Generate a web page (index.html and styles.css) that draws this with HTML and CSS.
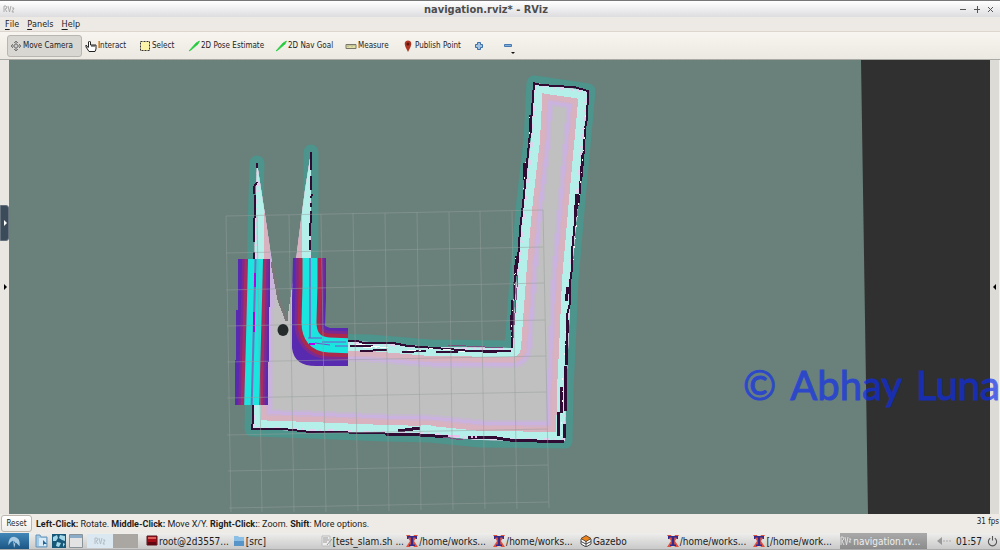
FILE: index.html
```html
<!DOCTYPE html>
<html lang="en">
<head>
<meta charset="utf-8">
<title>navigation.rviz* - RViz</title>
<link rel="stylesheet" href="styles.css">
</head>
<body>
<svg class="defs" aria-hidden="true">
  <symbol id="xterm" viewBox="0 0 12 12"><path fill="#e0503c" d="M0 0h4l2 4 2-4h4L8 6l4 6H8L6 8l-2 4H0l4-6z"/><path fill="#322a8c" d="M1 1h10v3H9.500V2.500H7.200v7H9V11H3V9.500h1.800v-7H2.500V4H1z"/></symbol>
  <symbol id="arrow" viewBox="0 0 12 12"><path fill="#22cc3c" stroke="#22cc3c" stroke-width=".7" d="M1 11 8 3 11.500 1l-1.500 3L3 10z"/></symbol>
</svg>
<div class="app">
  <header class="titlebar">
    <svg class="applogo" viewBox="0 0 12 8"><path d="M1 7V1h2l1 2-2 1 2 3M5 1l1.500 6L8 1M9 3h2L9 7h2" fill="none" stroke="#aaa"/></svg>
    <h1 class="title">navigation.rviz* - RViz</h1>
    <div class="winbuttons">
      <button aria-label="Minimize"><svg viewBox="0 0 8 8"><path d="M1 4.500h6"/></svg></button>
      <button aria-label="Maximize"><svg viewBox="0 0 8 8"><path d="M1 4.500h6M4.500 1v7"/></svg></button>
      <button aria-label="Close"><svg viewBox="0 0 8 8"><path d="m1 2 5 5m0-5L1 7"/></svg></button>
    </div>
  </header>
  <nav class="menubar">
    <button><u>F</u>ile</button><button><u>P</u>anels</button><button><u>H</u>elp</button>
  </nav>
  <div class="toolbar">
    <button class="tool active"><svg viewBox="0 0 12 12"><path d="M6 1v10M1 6h10M4 3l2-2 2 2M4 9l2 2 2-2M3 4 1 6l2 2M9 4l2 2-2 2" fill="none" stroke="#777"/><circle cx="6" cy="6" r="2" fill="#ccc" stroke="#777"/></svg>Move Camera</button>
    <button class="tool interact"><svg viewBox="0 0 12 12"><path d="M3.500 7V2q1-2 2 0v3h5.500v4l-1 2.500H4L1 7V5l2.500 3M7 5v2M9 5v2" fill="#fff" stroke="#222"/></svg>Interact</button>
    <button class="tool select"><svg viewBox="0 0 12 12"><path d="M1.500 1.500h9v9h-9z" fill="#fbf3a8" stroke="#333" stroke-dasharray="2 1"/></svg>Select</button>
    <button class="tool pose"><svg><use href="#arrow"/></svg>2D Pose Estimate</button>
    <button class="tool goal"><svg><use href="#arrow"/></svg>2D Nav Goal</button>
    <button class="tool measure"><svg viewBox="0 0 12 12"><path d="M1 4.500h10v4H1z" fill="#e0dfa4" stroke="#77786a"/><path d="M3 5v2m2-2v1m2-1v2m2-2v1" stroke="#777" stroke-width=".5"/></svg>Measure</button>
    <button class="tool publish"><svg viewBox="0 0 12 12"><path d="M6 12 3.500 7Q1 1 6 .5 11 1 8.500 7z" fill="#ae3522"/><circle cx="6" cy="4" r="1.500" fill="#5d130a"/></svg>Publish Point</button>
    <button class="tool plus" aria-label="Add tool"><svg viewBox="0 0 12 12"><path d="M4.500 2.500h3v2h2v3h-2v2h-3v-2h-2v-3h2z" fill="#a3c2e2" stroke="#3c6ea8"/></svg></button>
    <button class="tool minus" aria-label="Remove tool"><svg viewBox="0 0 14 16"><path d="M2.500 6.500h7v2h-7z" fill="#86aeda" stroke="#4679b0"/><path d="M9 14h4l-2 2z" fill="#111"/></svg></button>
  </div>
  <main class="workspace">
    <aside class="side left">
      <button class="handle" aria-label="Show displays"><svg viewBox="0 0 4 6"><path d="m1 0 3 3-3 3z" fill="#fff"/></svg></button>
      <button class="fold" aria-label="Show left panel"><svg viewBox="0 0 4 6"><path d="m1 0 3 3-3 3z"/></svg></button>
    </aside>
    <svg class="view" viewBox="9 60 981 454" preserveAspectRatio="none" role="img" aria-label="Costmap">
      <defs>
        <path id="room" d="M257 163 255 230 254 310 252 429 310 431 385 434 430 435 480 440 565 441 566 390 568 350 571 280 578 200 588 91 534 83 531 140 524 200 518 265 512 348 430 347 370 342 325 341 311 338 311 260 311 152 305 190 301 220 296 260 287 321 280 300 272 262 265 215Z"/>
        <path id="walls" d="M257 163 255 230 254 310 252 429 310 431 385 434 430 435 480 440 565 441 566 390 568 350 571 280 578 200 588 91 534 83 531 140 524 200 518 265 512 348 430 347 370 342 325 341 311 338 311 260 311 152"/>
        <clipPath id="inside"><use href="#room"/></clipPath>
        <path id="lw" d="M256 240 254 320 251 430"/>
        <path id="rw" d="M310 230v55l-1 37q0 22 20 23l55 2"/>
        <clipPath id="leftbox"><path d="M238 259h32v48h-1v55h-1v43h-33v-45h1v-50h2z"/></clipPath>
        <clipPath id="rightbox"><path d="M293 258h33v40l-1 28 5 2h18v38h-32q-22 0-24-18v-50z"/></clipPath>
      </defs>
      <path fill="#6a807b" d="M9 60h981v454H9z"/>
      <path fill="#303030" d="M861 60h129v454H868z"/>
      <use href="#walls" fill="none" stroke="#4c948c" stroke-width="15" stroke-linecap="round" stroke-linejoin="round"/>
      <g shape-rendering="crispEdges">
        <use href="#room" fill="#c0c0c0"/>
        <g clip-path="url(#inside)" fill="none" stroke-linejoin="round">
          <use href="#walls" stroke="#c4b9ce" stroke-width="41"/>
          <use href="#walls" stroke="#cab3de" stroke-width="37"/>
          <use href="#walls" stroke="#d0b2cc" stroke-width="31"/>
          <use href="#walls" stroke="#d9b2bf" stroke-width="28"/>
          <use href="#walls" stroke="#b5efea" stroke-width="18"/>
          <use href="#walls" stroke="#e2d2f0" stroke-width="5" stroke-dasharray="5 4 2 7"/>
        </g>
        <path d="m272 262 7 38 8 21" fill="none" stroke="#777a78" stroke-width="3"/>
        <g fill="none" stroke="#300c35">
          <path d="M257 163v5m0 14-3 5v7m1 1-1 47m0 10v8m0 0-1 160-1 9h32l26 3 75 1M311 152v18m0 6v14m1 4-1 4m0 5v4m0 4-1 25m0 4v10" stroke-width="2"/>
          <path d="M534 82v2l20 2 20 1 14 4v10l-1 9v9l-2 9-1 23-2 10-3 40-3 10-2 20-2 20v17l-2 15v20l-3 12v40M534 84l-3 39-4 40-3 32-4 35-2 30-4 25-2 63" stroke-width="2"/>
          <path d="m531 115-1 18m-5 30-1 17m-7 76-2 18m-2 26-2 30m72-175-2 22m-4 17-2 23m-7 70-2 14" stroke-width="3"/>
          <path d="M567 320v13m-1 8v24m-1 1v45m-4-24v26m-3-1v24m6-12v14" stroke-width="3"/>
          <path d="M348 341h10l5 2h30l15 3 40 3 22 2h40M360 351l27-1m15 2 24-1m10 1h22m3-1h12m10 1 28-1M350 346h23" stroke-width="2"/>
          <path d="m385 434 35 1 30 2m18 0h22l20 3 54 2M398 431l22-3" stroke-width="3"/>
        </g>
        <g fill="none" stroke="#fff">
          <path d="M356 344h12m3 2h12m-20 1h25m19 3h17m5-2h4m10 1h8m8 2h6" stroke-dasharray="9 3 2 3"/>
          <path d="m530 117-1 30m-3 15-3 34m-7 62-5 83" stroke-dasharray="1 14 2 9"/>
          <path d="m586 115-5 60-8 90m-7 66-2 35m-1 12-2 60" stroke-dasharray="2 11 1 8"/>
          <path d="M385 432h5m0-4v3m31-5h10m-4 3h10" stroke="#b5efea" stroke-width="2"/>
          <path d="M448 436h12m11 1h2m2 0h2" stroke="#efbdee" stroke-width="2"/>
        </g>
        <path d="m518 275-5 63M448 345l55 3m-60 89 20 3" stroke="#77527e" fill="none" stroke-width="1"/>
      </g>
      <g clip-path="url(#leftbox)" fill="none">
        <path fill="#572ab0" d="M230 250h45v160h-45z"/>
        <use href="#lw" stroke="#7c2991" stroke-width="27"/><use href="#lw" stroke="#a22e64" stroke-width="22"/>
        <use href="#lw" stroke="#1ae5df" stroke-width="15"/><use href="#lw" stroke="#746fc1" stroke-width="2"/>
        <path d="M255 273v14m-1 25v20" stroke="#b900d9" stroke-width="2"/>
      </g>
      <g clip-path="url(#rightbox)" fill="none">
        <path fill="#572ab0" d="M285 250h70v120h-70z"/>
        <use href="#rw" stroke="#7c2991" stroke-width="29"/><use href="#rw" stroke="#ab294c" stroke-width="23"/>
        <use href="#rw" stroke="#1ae5df" stroke-width="15"/>
        <path d="M310 258v80" stroke="#5b87cb" stroke-width="2"/>
        <path d="M308 338h14m-7 5 15 2m5 1h13m-26-4h24" stroke="#7651cb"/><path d="M309 344h6" stroke="#ba00ed" stroke-width="2"/>
      </g>
      <path d="m226 216 317-6m-317 43 317-6m-317 43 318-7m-317 43 318-6m-318 42 319-6m-319 42 319-6m-319 43 320-6m-319 42 320-6m-319 43 320-6M226 216l5 296M257 215l5 297M289 215l5 297M321 214l5 298M353 213l5 298M385 213l4 298M417 212l4 298M449 212l4 298M480 211l5 298M512 211l5 298M543 210l6 298" fill="none" stroke="#96a09b" stroke-opacity=".5"/>
      <ellipse cx="283" cy="330" rx="5.500" ry="6" fill="#252b2a"/>
    </svg>
    <aside class="side right"><button class="fold" aria-label="Show right panel"><svg viewBox="0 0 4 6"><path d="M3 0 0 3l3 3z"/></svg></button></aside>
    <p class="watermark"><span>©</span><span>Abhay</span><span>Luna</span></p>
  </main>
  <div class="status">
    <button class="reset">Reset</button>
    <p class="hint"><b>Left-Click:</b> Rotate. <b>Middle-Click:</b> Move X/Y. <b>Right-Click:</b>: Zoom. <b>Shift</b>: More options.</p>
    <output class="fps">31 fps</output>
  </div>
  <footer class="taskbar">
    <button class="start" aria-label="Menu"><svg viewBox="0 0 29 17"><path d="M8 13q0-9 6-9 7 1 6 10l-4-4-2 6-1-8q-3 1-5 5z" fill="#a9cce5"/><path d="m14 9 3 5" stroke="#2b628e"/></svg></button>
    <div class="launchers">
      <button aria-label="Files"><svg viewBox="0 0 14 14"><path d="M1 1h4l1 2h6v10H1z" fill="#a4cae5" stroke="#6795b9"/><path d="M4 4h7v8H4z" fill="#d7eaf5"/><path d="m8 6 4 4H9l-1 2z" fill="#286592"/></svg></button>
      <button aria-label="Browser"><svg viewBox="0 0 14 14"><path d="M0 0h14v14H0z" fill="#175879"/><path d="m1 3 4-2 1 3-2 3H1zm7-2 5 1v5l-3-1-3-2zM5 8l4 1-2 4-3-1zm6 1 2 1-2 3z" fill="#a4d7e8"/></svg></button>
      <button aria-label="Show desktop"><svg viewBox="0 0 14 14"><path d="M.5.5h13v13H.5z" fill="#e2e3e2" stroke="#8a9397"/><path d="M1 1h12v3H1z" fill="#8bacc8"/></svg></button>
    </div>
    <div class="pager"><button aria-label="Desktop 1"><svg viewBox="0 0 12 8"><path d="M1 7V1h2l1 2-2 1 2 3M5 1l1.500 6L8 1M9 3h2L9 7h2" fill="none" stroke="#b2bcc4"/></svg></button><button aria-label="Desktop 2"></button></div>
    <div class="tasks">
      <button><svg viewBox="0 0 12 12"><path d="M1 1h10v9H1z" fill="#a30d18" stroke="#54161a"/><path d="M2 2h8v2H2z" fill="#df5d5b"/><path d="M2 7h8v3H2z" fill="#610711"/></svg>root@2d3557...</button>
      <button><svg viewBox="0 0 12 12"><path d="M1 1h4l1 1h5v9H1z" fill="#8bbfe6"/><path d="M1 6h10v5H1z" fill="#5795c8"/></svg>[src]</button>
      <button><svg viewBox="0 0 12 12"><path d="M2 1h8v10H2z" fill="#eee" stroke="#bbb"/><path d="M3 3h5M3 5h6M3 7h4m0 3 5-6" stroke="#999"/></svg>[test_slam.sh ...</button>
      <button><svg><use href="#xterm"/></svg>/home/works...</button>
      <button><svg><use href="#xterm"/></svg>/home/works...</button>
      <button><svg viewBox="0 0 12 12"><path d="m1 4 5-3 5 3v5l-5 3-5-3z" fill="#fff" stroke="#444"/><path d="m1 3.500 5-3 5 3-5 3z" fill="#ed841b" stroke="#644b32"/><path d="M1 6.500 6 9l5-2.500M6 6v6" fill="none" stroke="#444"/></svg>Gazebo</button>
      <button><svg><use href="#xterm"/></svg>/home/works...</button>
      <button><svg><use href="#xterm"/></svg>[/home/work...</button>
      <button class="current"><svg viewBox="0 0 12 12"><path d="M1 10V2h2l1 2-2 2 2 4M5 2l1.500 8L8 2M9 4h2L9 7h2" fill="none" stroke="#ddd"/></svg>navigation.rv...</button>
    </div>
    <div class="tray">
      <svg class="sound" viewBox="0 0 14 10"><path d="M0 5 5 1v8z" fill="#999"/><path d="M6 5h8" stroke="#aaa" stroke-dasharray="2 1"/></svg>
      <time>01:57</time>
      <button aria-label="Power"><svg viewBox="0 0 12 12"><path d="M3.500 2.500a4.500 4.500 0 1 0 5 0M6 0v5" fill="none" stroke="#555" stroke-width="1.200"/></svg></button>
    </div>
  </footer>
</div>
</body>
</html>
```
FILE: styles.css
```css
* { box-sizing: border-box; }
body { margin: 0; font-family: "DejaVu Sans Condensed", "DejaVu Sans", sans-serif; font-size: 8px; color: #1c1c1c; }
button { margin: 0; padding: 0; border: 0; background: none; font: inherit; color: inherit; display: flex; align-items: center; white-space: nowrap; }
p, h1 { margin: 0; }
svg { display: block; flex: none; }
.defs { position: absolute; width: 0; height: 0; }
.app { min-height: 100vh; display: grid; grid-template-rows: 17px 14px 29px 1fr 19px 17px; overflow: hidden; }
.titlebar { display: grid; grid-template-columns: 1fr auto 1fr; align-items: center; padding: 0 5px 0 3px; border-top: 1px solid #777; background: linear-gradient(#fff, #dddde0); }
.applogo { width: 12px; height: 8px; }
.title { margin-left: -26px; font-size: 11px; line-height: 15px; font-weight: bold; color: #4d4d4d; }
.winbuttons { display: flex; justify-content: flex-end; gap: 6px; }
.winbuttons svg { width: 8px; height: 8px; fill: none; stroke: #555; }
.menubar { display: flex; align-items: center; gap: 8px; padding-left: 5px; background: #edeae6; font-size: 9px; line-height: 12px; }
.menubar u { text-underline-offset: 2px; }
.toolbar { display: flex; align-items: center; padding: 2px 7px; background: linear-gradient(#f8f5f0, #ece8e2); border-top: 1px solid #dcd6ce; border-bottom: 1px solid #a9aaa5; }
.tool { height: 22px; }
.tool svg { width: 12px; height: 12px; margin-right: 1px; }
.active { width: 75px; padding-left: 2px; border: 1px solid #b8b6b0; border-radius: 3px; background: #d8d7d1; }
.interact { width: 57px; padding-left: 3px; }
.select { width: 49px; }
.pose { width: 87px; }
.goal { width: 70px; }
.measure { width: 57px; }
.publish { width: 71px; }
.plus { width: 29px; }
.minus svg { width: 14px; height: 16px; }
.workspace { position: relative; min-height: 0; display: grid; grid-template-columns: 9px 1fr 10px; }
.view { width: 100%; height: 100%; min-height: 0; }
.side { background: #e9e6e1; display: grid; grid-template-rows: 145px 36px 1fr; }
.right { background: #dcdbd6; grid-template-rows: 181px 1fr; border-right: 1px solid #f2f1ef; }
.handle { grid-row: 2; justify-content: center; background: #3c4b5a; border: 1px solid #63707c; border-radius: 0 3px 3px 0; }
.fold { grid-row: 3; align-items: flex-start; padding-top: 43px; justify-content: center; }
.right .fold { grid-row: 2; }
.side svg { width: 4px; height: 6px; }
.watermark { position: absolute; top: 300px; right: 0; display: flex; gap: 14px; font: 40px/50px "Comic Sans MS", Lato, sans-serif; color: #0e2eee; -webkit-text-stroke: 1px #0e2eee; opacity: .67; white-space: nowrap; }
.status { display: grid; grid-template-columns: 32px 1fr auto; align-items: center; gap: 4px; background: #eeebe6; }
.reset { height: 17px; margin-left: 1px; justify-content: center; border: 1px solid #bbb6ae; border-radius: 3px; background: linear-gradient(#fff, #f0eeeb); }
.hint { font-family: Roboto, sans-serif; font-size: 9px; line-height: 12px; }
.fps { align-self: start; padding: 3px 1px 0 0; }
.taskbar { display: grid; grid-template-columns: 29px 55px 55px 1fr 73px; align-items: center; background: linear-gradient(#eeeeed, #c9c9c9); font-size: 10px; border-bottom: 1px solid #aaa; }
.start { height: 16px; background: linear-gradient(#4288b9, #1b5685); }
.start svg { width: 29px; height: 16px; }
.launchers { display: flex; gap: 3px; padding-left: 6px; }
.launchers svg { width: 14px; height: 14px; }
.pager { display: grid; grid-template-columns: 1fr 1fr; height: 14px; padding: 0 1px 0 3px; }
.pager button { justify-content: center; background: #dbe8f1; }
.pager button + button { background: #aaa7a3; }
.pager svg { width: 12px; height: 8px; }
.tasks { display: grid; grid-template-columns: repeat(9, minmax(0, 1fr)); padding-left: 7px; }
.tasks button { height: 16px; gap: 1px; }
.tasks svg { width: 12px; height: 12px; }
.tasks .current { background: linear-gradient(#a9a9a9, #8c8c8c); color: #eee; }
.tray { display: flex; align-items: center; justify-content: space-between; padding: 0 2px 0 10px; }
.sound { width: 14px; height: 10px; }
.tray button svg { width: 11px; height: 11px; }
```
